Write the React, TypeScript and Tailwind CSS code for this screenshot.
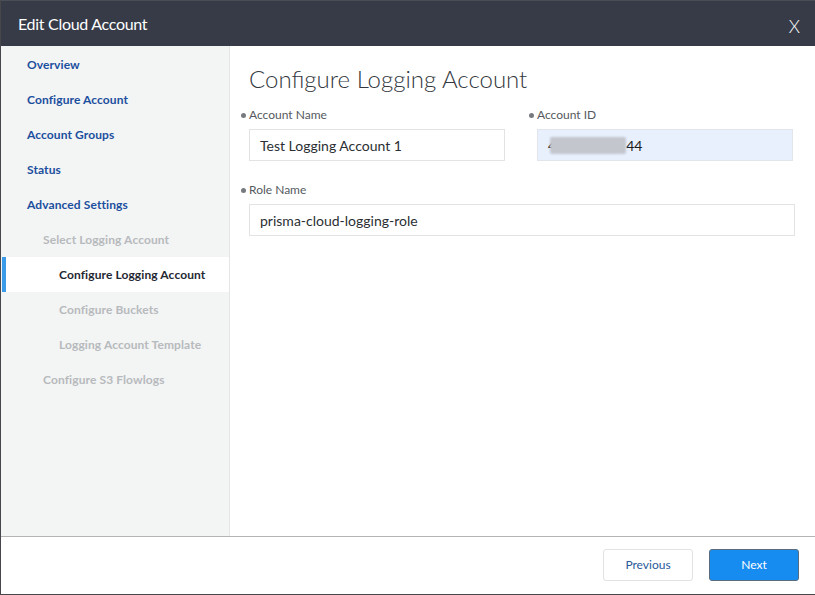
const navItems = [
  { label: "Overview", level: 0, state: "link" },
  { label: "Configure Account", level: 0, state: "link" },
  { label: "Account Groups", level: 0, state: "link" },
  { label: "Status", level: 0, state: "link" },
  { label: "Advanced Settings", level: 0, state: "link" },
  { label: "Select Logging Account", level: 1, state: "muted" },
  { label: "Configure Logging Account", level: 2, state: "active" },
  { label: "Configure Buckets", level: 2, state: "muted" },
  { label: "Logging Account Template", level: 2, state: "muted" },
  { label: "Configure S3 Flowlogs", level: 1, state: "muted" },
]

function Label({ text }: { text: string }) {
  return (
    <div className="flex items-center -ml-[8px] h-[16px] text-[12px] text-[#555a60] mb-[6px]">
      <span className="w-[5px] h-[5px] rounded-full bg-[#777b80] mr-[3px]" />
      {text}
    </div>
  )
}

export default function App() {
  return (
    <div
      className="w-[815px] h-[595px] bg-white border-l border-b border-[#45474b] flex flex-col overflow-hidden"
      style={{ fontFamily: "Lato, 'Open Sans', sans-serif" }}
    >
      {/* Header */}
      <div className="h-[46px] shrink-0 bg-[#363b47] border-t border-[#4a4e57] flex items-center justify-between pl-[17px] pr-[15px]">
        <h1 className="text-white text-[16px] tracking-[-0.3px]">Edit Cloud Account</h1>
        <span className="text-white text-[18px] font-light mt-[6px]">X</span>
      </div>

      {/* Body */}
      <div className="flex h-[490px] shrink-0">
        <nav className="w-[229px] shrink-0 bg-[#f3f4f4] border-r border-[#e4e6e6] pt-px">
          {navItems.map((item) => {
            const pad = item.level === 0 ? "pl-[26px]" : item.level === 1 ? "pl-[42px]" : "pl-[58px]"
            if (item.state === "active") {
              return (
                <div
                  key={item.label}
                  className="h-[35px] ml-px flex items-center bg-white border-l-[4px] border-[#3b9be9] pl-[53px] text-[12px] tracking-[0.1px] font-bold text-[#1f2833]"
                >
                  {item.label}
                </div>
              )
            }
            return (
              <div
                key={item.label}
                className={`h-[35px] flex items-center ${pad} text-[12px] tracking-[0.1px] font-bold ${
                  item.state === "link" ? "text-[#1b4f9e]" : "text-[#b7babd]"
                }`}
              >
                {item.label}
              </div>
            )
          })}
        </nav>

        <main className="flex-1 pl-[19px] pr-[20px] pt-[18px]">
          <h2 className="text-[24px] leading-[30px] font-light text-[#333840] mb-[13px]">
            Configure Logging Account
          </h2>

          <div className="grid grid-cols-[256px_256px] gap-x-[32px]">
            <div>
              <Label text="Account Name" />
              <div className="h-[32px] border border-[#e2e3e4] flex items-center px-[10px] text-[14px] text-[#2b2f33]">
                Test Logging Account 1
              </div>
            </div>
            <div>
              <Label text="Account ID" />
              <div className="h-[32px] border border-[#e2e5ea] bg-[#e8f0fe] flex items-center px-[10px] text-[14px] text-[#1c1c1c]">
                <span>4</span>
                <span className="inline-block w-[76px] h-[17px] -ml-[6px] bg-[#c3c6cc] blur-[1px] rounded-[2px]" />
                <span>44</span>
              </div>
            </div>
          </div>

          <div className="mt-[21px]">
            <Label text="Role Name" />
            <div className="h-[32px] border border-[#e2e3e4] flex items-center px-[10px] text-[14px] text-[#2b2f33]">
              prisma-cloud-logging-role
            </div>
          </div>
        </main>
      </div>

      {/* Footer */}
      <div className="flex-1 border-t border-[#b4b4b4] flex items-center justify-end gap-[16px] pr-[16px] pb-[2px]">
        <button className="w-[90px] h-[32px] bg-white border border-[#e0e2e4] rounded-[3px] text-[12px] text-[#2a5a9a]">
          Previous
        </button>
        <button className="w-[90px] h-[32px] bg-[#168cf0] border border-[#5a6d80] rounded-[3px] text-[12px] text-white">
          Next
        </button>
      </div>
    </div>
  )
}
